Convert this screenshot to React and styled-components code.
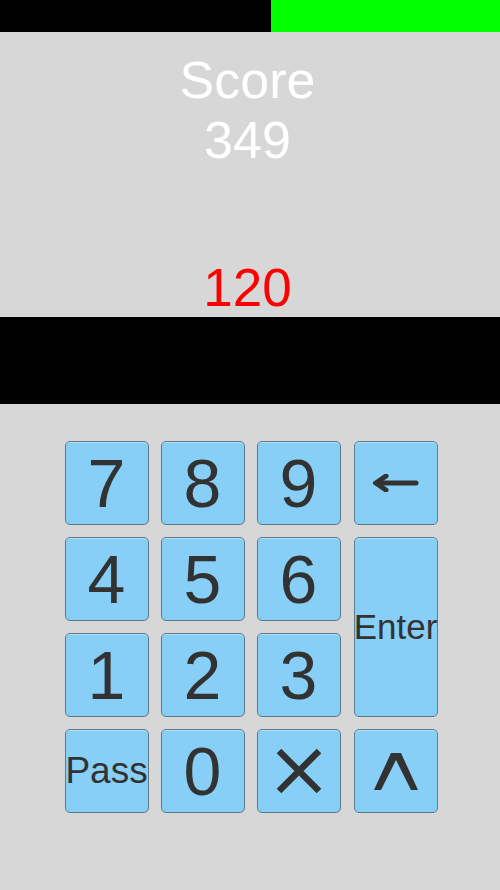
import React from 'react';
import styled, { createGlobalStyle } from 'styled-components';

const GlobalStyle = createGlobalStyle`
  html, body {
    margin: 0;
    padding: 0;
    background: #d7d7d7;
    font-family: "Liberation Sans", Arial, sans-serif;
  }
`;

const Page = styled.div`
  width: 500px;
  min-height: 890px;
  background: #d7d7d7;
  display: flex;
  flex-direction: column;
`;

// timer bar along the top: black part is spent, green is what is left
const TimeBar = styled.div`
  height: 32px;
  display: flex;
`;

const TimeSpent = styled.div`
  background: #000;
`;

const TimeLeft = styled.div`
  flex: 1;
  background: #00ff00;
`;

const ScorePanel = styled.div`
  height: 285px;
  box-sizing: border-box;
  padding: 18px 5px 0 0;
  display: flex;
  flex-direction: column;
  align-items: center;
`;

const ScoreText = styled.div`
  color: #fff;
  font-size: 52px;
  line-height: 60px;
  text-align: center;
`;

const Countdown = styled.div`
  margin-top: auto;
  color: #ff0000;
  font-size: 53px;
  line-height: 52px;
  padding-bottom: 3px;
`;

const Band = styled.div`
  height: 87px;
  background: #000;
`;

const Keypad = styled.div`
  display: grid;
  grid-template-columns: 84px 84px 84px 85px;
  grid-auto-rows: 84px;
  column-gap: 12px;
  row-gap: 12px;
  justify-content: center;
  padding: 37px 0 0 2px;
`;

const Key = styled.button`
  box-sizing: border-box;
  width: 84px;
  justify-self: end;
  border: 1px solid #5f7b8a;
  border-radius: 5px;
  background: #87cff6;
  box-shadow: inset 0 1px 0 rgba(255, 255, 255, 0.35);
  color: #323232;
  font-family: "Liberation Sans", Arial, sans-serif;
  font-size: ${(p) => p.$size || 68}px;
  padding: 0;
  display: flex;
  align-items: center;
  justify-content: center;
  overflow: visible;
  white-space: nowrap;
  grid-row: ${(p) => (p.$tall ? 'span 2' : 'auto')};
`;

const BackIcon = () => (
  <svg width="46" height="18" viewBox="0 0 46 18">
    <path d="M6 9 H43" stroke="#323232" strokeWidth="5" strokeLinecap="round" />
    <path d="M13 2 L3 9 L13 16" stroke="#323232" strokeWidth="5" fill="none" strokeLinejoin="miter" strokeLinecap="round" />
  </svg>
);

const ClearIcon = () => (
  <svg width="46" height="46" viewBox="0 0 46 46">
    <path d="M3 3 L43 43 M43 3 L3 43" stroke="#323232" strokeWidth="6.5" />
  </svg>
);

const UpIcon = () => (
  <svg width="44" height="37" viewBox="0 0 44 37">
    <polygon points="0,37 17,0 27,0 44,37 37,37 22,7 7,37" fill="#323232" />
  </svg>
);

const App = () => {
  const timeSpent = 271;
  const score = 349;
  const remaining = 120;

  return (
    <Page>
      <GlobalStyle />
      <TimeBar>
        <TimeSpent style={{ width: timeSpent }} />
        <TimeLeft />
      </TimeBar>
      <ScorePanel>
        <ScoreText>Score</ScoreText>
        <ScoreText>{score}</ScoreText>
        <Countdown>{remaining}</Countdown>
      </ScorePanel>
      <Band />
      <Keypad>
        <Key>7</Key>
        <Key>8</Key>
        <Key>9</Key>
        <Key><BackIcon /></Key>
        <Key>4</Key>
        <Key>5</Key>
        <Key>6</Key>
        <Key $tall $size={35}>Enter</Key>
        <Key>1</Key>
        <Key>2</Key>
        <Key>3</Key>
        <Key $size={37}>Pass</Key>
        <Key>0</Key>
        <Key><ClearIcon /></Key>
        <Key><UpIcon /></Key>
      </Keypad>
    </Page>
  );
};

export default App;
